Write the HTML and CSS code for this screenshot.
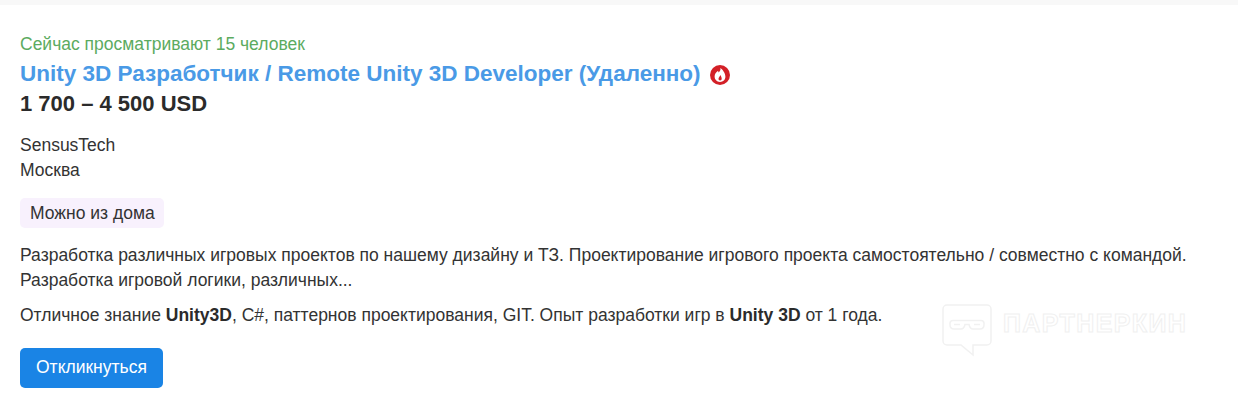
FILE: index.html
```html
<!DOCTYPE html>
<html lang="ru">
<head>
<meta charset="utf-8">
<title>Вакансия</title>
<link rel="stylesheet" href="styles.css">
</head>
<body>
<div class="topbar"></div>
<main class="card">
  <div class="viewers">Сейчас просматривают 15 человек</div>
  <h2 class="title"><a href="#">Unity 3D Разработчик / Remote Unity 3D Developer (Удаленно)</a>
    <svg class="hot" viewBox="0 0 20 20" width="20" height="20"><circle cx="10" cy="10" r="10" fill="#d32027"/><path d="M10.400 3c.5 2.200-.6 3.300-1.700 4.500-.4-.6-.6-1.100-.6-1.700C6 7.300 4.600 9.300 4.600 11.500c0 3.100 2.300 5.400 5.400 5.400s5.400-2.200 5.400-5.200c0-3.600-2.600-7-5-8.700z" fill="#fff"/><path d="M10.200 10c.2 1.200-1.700 2.100-1.700 3.800 0 1 .7 1.600 1.600 1.600s1.600-.7 1.600-1.700c0-1.500-.7-2.700-1.500-3.700z" fill="#d32027"/></svg>
  </h2>
  <div class="salary">1 700 – 4 500 USD</div>
  <div class="company">SensusTech</div>
  <div class="city">Москва</div>
  <div class="tags"><span class="tag">Можно из дома</span></div>
  <p class="desc">Разработка различных игровых проектов по нашему дизайну и ТЗ. Проектирование игрового проекта самостоятельно / совместно с командой.<br>Разработка игровой логики, различных...</p>
  <p class="req">Отличное знание <b>Unity3D</b>, C#, паттернов проектирования, GIT. Опыт разработки игр в <b>Unity 3D</b> от 1 года.</p>
  <a class="btn" href="#">Откликнуться</a>
</main>
<div class="watermark">
  <svg viewBox="0 0 50 54" width="50" height="54" fill="none" stroke="#f1f1f1" stroke-width="1.500"><path d="M5 1h40a4 4 0 0 1 4 4v32a4 4 0 0 1-4 4H31v10L19 41H5a4 4 0 0 1-4-4V5a4 4 0 0 1 4-4z"/><path d="M8 19.500q0-3 3-3h28q3 0 3 3v1q0 4.500-4 4.500h-7q-3 0-4-4.500h-4q-1 4.500-4 4.500h-7q-4 0-4-4.500z"/><path d="M12 20.500h6M32 20.500h6"/></svg>
  <span class="wm-text">ПАРТНЕРКИН</span>
</div>
</body>
</html>
```
FILE: styles.css
```css
* { box-sizing: border-box; }
html, body { margin: 0; padding: 0; }
body {
  position: relative;
  height: 408px;
  overflow: hidden;
  background: #fff;
  color: #333;
  font-family: "Liberation Sans", Arial, sans-serif;
  font-size: 17.500px;
  line-height: 25px;
}
.topbar { height: 5px; background: #f8f8f8; }
.card { padding: 26px 20px 0; }
.viewers { color: #5cab5f; line-height: 27px; margin-bottom: 1px; }
.title {
  margin: 0;
  font-size: 22.500px;
  line-height: 30px;
  font-weight: 700;
  height: 30px;
}
.title a { color: #4a9ae6; text-decoration: none; }
.hot { vertical-align: -4px; margin-left: 3px; }
.salary {
  font-size: 22px;
  font-weight: 700;
  line-height: 30px;
  color: #2b2b2b;
  margin-bottom: 14px;
}
.tags { margin-top: 15px; }
.tag {
  display: inline-block;
  background: #f8f1fd;
  border-radius: 5px;
  padding: 0 9px 0 10px;
  height: 30px;
  line-height: 30px;
}
.desc { margin: 15px 0 0; }
.req { margin: 10px 0 0; }
.req b { color: #2b2b2b; }
.btn {
  display: inline-block;
  margin-top: 20px;
  height: 40px;
  line-height: 39px;
  padding: 0 16px;
  background: #1a84e5;
  color: #fff;
  border-radius: 5px;
  text-decoration: none;
}
.watermark {
  position: absolute;
  left: 942px;
  top: 304px;
  display: flex;
  align-items: flex-start;
  gap: 11px;
}
.wm-text {
  margin-top: 5px;
  font-size: 25px;
  font-weight: 700;
  line-height: 28px;
  letter-spacing: 1.400px;
  color: #fff;
  -webkit-text-stroke: 1px #f0f0f0;
}
```
